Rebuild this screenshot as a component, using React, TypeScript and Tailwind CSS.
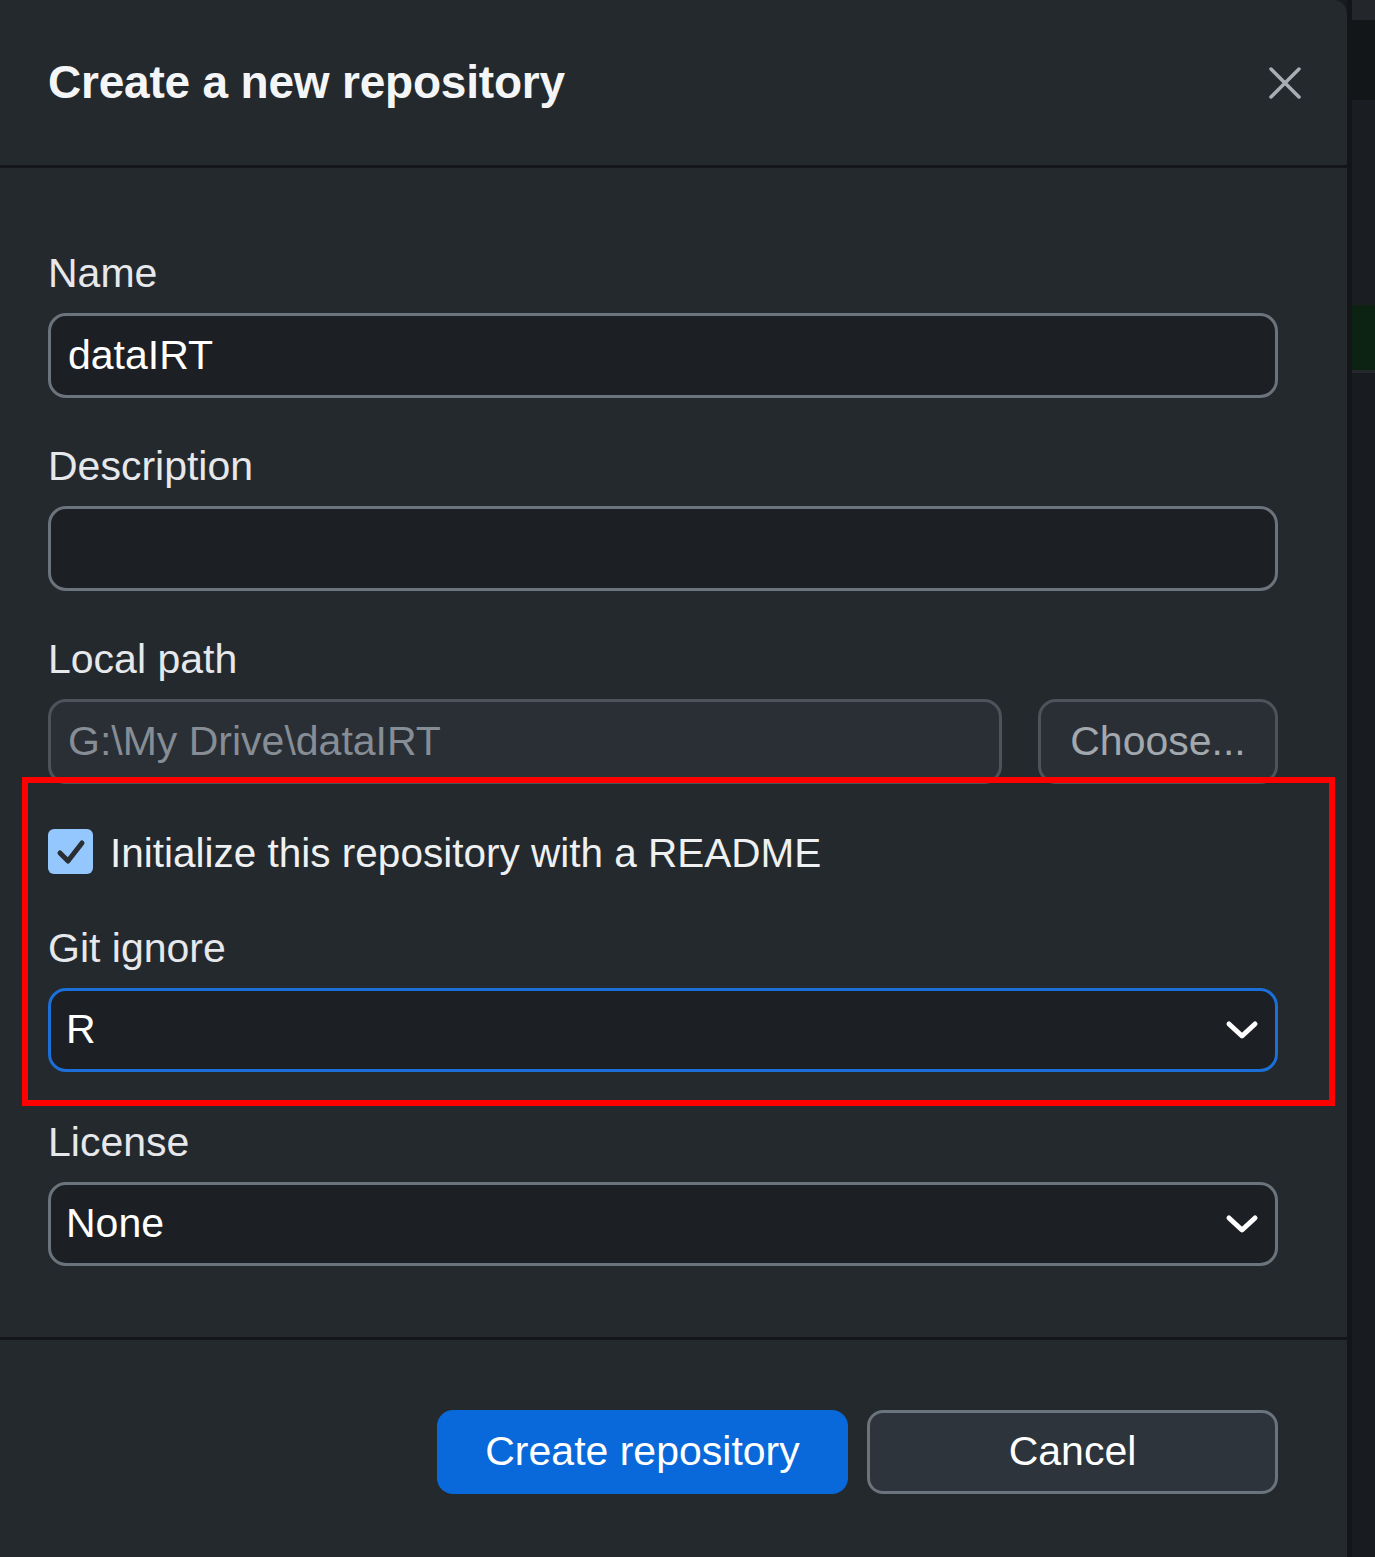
import React from "react";

const font = { fontFamily: '"Liberation Sans", Arial, sans-serif' };

const Chevron = () => (
  <svg width="34" height="24" viewBox="0 0 34 24" className="shrink-0">
    <path d="M4 6 L17 18 L30 6" fill="none" stroke="#ffffff" strokeWidth="5" strokeLinecap="round" strokeLinejoin="round" />
  </svg>
);

const Label = ({ children }: { children: React.ReactNode }) => (
  <div className="h-[48px] text-[41px] leading-[48px] text-[#e6e8eb]">{children}</div>
);

const App = () => {
  return (
    <div className="w-[1375px] h-[1557px] flex flex-row bg-[#181b1f] overflow-hidden" style={font}>
      <div className="relative w-[1347px] h-full bg-[#24292e] rounded-tr-[14px] flex flex-col">
        {/* header */}
        <div className="h-[165px] flex flex-row items-center justify-between pl-[48px] pr-[45px]">
          <h1 className="m-0 text-[46px] font-bold text-[#f4f5f6] tracking-[-0.2px]">Create a new repository</h1>
          <svg width="34" height="34" viewBox="0 0 34 34">
            <path d="M3 3 L31 31 M31 3 L3 31" stroke="#a9aeb4" strokeWidth="3.5" strokeLinecap="round" />
          </svg>
        </div>
        <div className="h-[3px] bg-[#141619]" />

        {/* body */}
        <div className="flex flex-col pl-[48px] pr-[69px] pt-[81px] pb-[71px]">
          <Label>Name</Label>
          <div className="mt-[16px] h-[85px] rounded-[18px] border-[3px] border-[#6b737c] bg-[#1c1f23] flex items-center pl-[17px] text-[41px] text-white">
            dataIRT
          </div>

          <div className="mt-[44px]">
            <Label>Description</Label>
          </div>
          <div className="mt-[16px] h-[85px] rounded-[18px] border-[3px] border-[#6b737c] bg-[#1c1f23]" />

          <div className="mt-[44px]">
            <Label>Local path</Label>
          </div>
          <div className="mt-[16px] flex flex-row gap-[36px]">
            <div className="flex-1 h-[85px] rounded-[18px] border-[3px] border-[#4c535b] bg-[#2a2f36] flex items-center pl-[17px] text-[41px] text-[#868d95]">
              G:\My Drive\dataIRT
            </div>
            <div className="w-[240px] h-[85px] rounded-[18px] border-[3px] border-[#4c535b] bg-[#2a2f36] flex items-center justify-center text-[41px] text-[#a2a8ae]">
              Choose...
            </div>
          </div>

          <div className="mt-[45px] h-[45px] flex flex-row items-center gap-[17px]">
            <div className="w-[45px] h-[45px] rounded-[6px] bg-[#95c7ff] flex items-center justify-center">
              <svg width="34" height="34" viewBox="0 0 34 34">
                <path d="M6 18 L14 26 L28 8" fill="none" stroke="#2a2e33" strokeWidth="5" strokeLinecap="round" strokeLinejoin="round" />
              </svg>
            </div>
            <span className="text-[40.5px] leading-[48px] text-[#eef0f2] relative top-[1px]">Initialize this repository with a README</span>
          </div>

          <div className="mt-[50px]">
            <Label>Git ignore</Label>
          </div>
          <div className="mt-[16px] h-[84px] rounded-[18px] border-[3px] border-[#1a6fd8] bg-[#1c1f23] flex flex-row items-center justify-between pl-[15px] pr-[16px] text-[41px] text-white">
            <span>R</span>
            <Chevron />
          </div>

          <div className="mt-[46px]">
            <Label>License</Label>
          </div>
          <div className="mt-[16px] h-[84px] rounded-[18px] border-[3px] border-[#6b737c] bg-[#1c1f23] flex flex-row items-center justify-between pl-[15px] pr-[16px] text-[41px] text-white">
            <span>None</span>
            <Chevron />
          </div>
        </div>

        <div className="h-[3px] bg-[#141619]" />

        {/* footer */}
        <div className="flex flex-row justify-end gap-[19px] pt-[70px] pr-[69px]">
          <button className="w-[411px] h-[84px] rounded-[16px] bg-[#0969da] text-[41px] text-white">Create repository</button>
          <button className="w-[411px] h-[84px] rounded-[16px] bg-[#2e343b] border-[3px] border-[#6b737c] text-[41px] text-white">Cancel</button>
        </div>

        {/* annotation */}
        <div className="absolute left-[22px] top-[777px] w-[1313px] h-[329px] border-[6px] border-[#ff0000] pointer-events-none" />
      </div>

      {/* window behind */}
      <div className="flex-1 flex flex-col border-l-[5px] border-[#131517]">
        <div className="h-[20px] bg-[#23272b]" />
        <div className="h-[80px] bg-[#131619]" />
        <div className="h-[205px] bg-[#1a1d21]" />
        <div className="h-[65px] bg-[#0c2314]" />
        <div className="h-[3px] bg-[#24282c]" />
        <div className="flex-1 bg-[#181b1f]" />
      </div>
    </div>
  );
};

export default App;
